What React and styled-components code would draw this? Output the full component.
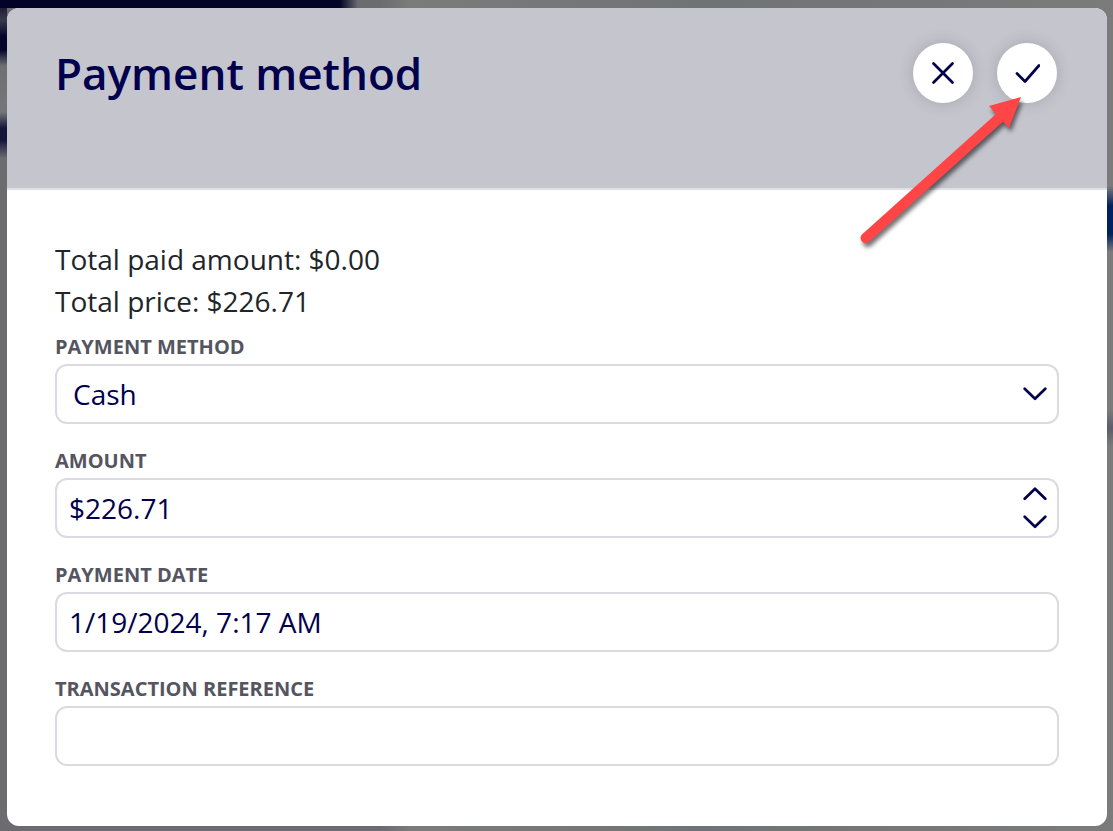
import React, { useState } from "react";
import styled, { createGlobalStyle } from "styled-components";

const navy = "#00004d";

const GlobalStyle = createGlobalStyle`
    * {
        box-sizing: border-box;
    }

    body {
        margin: 0;
        font-family: "Open Sans", "Noto Sans", sans-serif;
    }
`;

const Backdrop = styled.div`
    min-height: 100vh;
    padding: 8px 6px 5px 7px;
    background:
        linear-gradient(90deg, #030327 0, #030327 340px, transparent 358px) 0 0 / 100% 8px no-repeat,
        linear-gradient(#0a0a2c 0, #3a3a4e 20px, #05052c 36px, #05052c 50px, #707072 66px, #76767a 112px, #15153a 128px, #15153a 140px, #6b6b70 158px, #6b6b70 100%) 0 0 / 7px 100% no-repeat,
        linear-gradient(transparent 186px, #00205f 206px, #00205f 234px, transparent 252px, transparent 410px, #5c5c6c 428px, transparent 446px) 100% 0 / 6px 100% no-repeat,
        linear-gradient(90deg, #6b6b70 0, #6b6b70 380px, #7b7b7b 410px, #707375 700px, #7b7b7b 100%);
`;

const Dialog = styled.form`
    position: relative;
    display: flex;
    flex-direction: column;
    border-radius: 12px;
    background: #fff;
`;

const Header = styled.header`
    display: flex;
    justify-content: space-between;
    align-items: flex-start;
    min-height: 182px;
    padding: 35px 50px 0 48px;
    border-bottom: 2px solid #dfdfe6;
    border-radius: 12px 12px 0 0;
    background: #c5c5ce;
`;

const Title = styled.h1`
    margin: 0;
    color: ${navy};
    font-size: 44px;
    font-weight: 600;
    line-height: 60px;
`;

const Actions = styled.div`
    display: flex;
    gap: 24px;
`;

const RoundButton = styled.button`
    display: flex;
    align-items: center;
    justify-content: center;
    width: 60px;
    height: 60px;
    padding: 0;
    border: 0;
    border-radius: 50%;
    background: #fff;
    color: ${navy};
    box-shadow: 0 0 16px rgba(0, 0, 0, 0.16);
    cursor: pointer;
`;

const Body = styled.div`
    padding: 48px 48px 60px;
`;

const Totals = styled.div`
    margin-bottom: 8px;
    color: #212529;
    font-size: 28px;
    line-height: 42px;
`;

const Total = styled.p`
    margin: 0;
`;

const Fields = styled.div`
    display: flex;
    flex-direction: column;
    gap: 20px;
`;

const Label = styled.label`
    display: block;
    color: #555560;
    font-size: 20px;
    font-weight: 700;
    line-height: 34px;
    text-transform: uppercase;
`;

const Control = styled.div`
    display: grid;
    grid-template-columns: 1fr 44px;
    align-items: center;
    height: 60px;
    border: 2px solid #dadae1;
    border-radius: 12px;
    background: #fff;
    color: ${navy};

    & > * {
        grid-row: 1;
    }

    & > svg {
        grid-column: 2;
        justify-self: center;
        pointer-events: none;
    }
`;

const Input = styled.input`
    grid-column: ${props => (props.$wide ? "1 / -1" : "1")};
    width: 100%;
    height: 56px;
    padding: 0 12px;
    border: 0;
    border-radius: 10px;
    outline: 0;
    background: transparent;
    color: inherit;
    font-family: inherit;
    font-size: 28px;
`;

const Select = styled.select`
    grid-column: 1 / -1;
    width: 100%;
    height: 56px;
    padding: 0 44px 0 16px;
    border: 0;
    outline: 0;
    appearance: none;
    background: transparent;
    color: inherit;
    font-family: inherit;
    font-size: 28px;
`;

const Stepper = styled.div`
    display: flex;
    flex-direction: column;
`;

const StepButton = styled.button`
    display: flex;
    align-items: center;
    justify-content: center;
    height: 28px;
    padding: 0;
    border: 0;
    background: transparent;
    color: inherit;
    cursor: pointer;
`;

const Pointer = styled.svg`
    position: absolute;
    top: 82px;
    right: 67px;
    pointer-events: none;
    filter: drop-shadow(2px 4px 2px rgba(0, 0, 0, 0.55));
`;

const Stroke = ({ d, width, height }) =>
    <svg width={width} height={height} viewBox={`0 0 ${width} ${height}`} fill="none" stroke="currentColor" strokeWidth="2.7" strokeLinecap="round" strokeLinejoin="round" aria-hidden="true">
        <path d={d} />
    </svg>

const ChevronDown = () => <Stroke width={24} height={14} d="M1.700 1.700 12 11.700 22.300 1.700" />

const ChevronUp = () => <Stroke width={24} height={14} d="M1.700 11.700 12 1.700 22.300 11.700" />

const Arrow = () =>
    <Pointer width="190" height="170" viewBox="0 0 190 170" aria-hidden="true">
        <path d="M171 7 139 16 146 24 12.500 144 A5 5 0 0 0 19 152 L153 31.500 159 38Z" fill="#ff4545" />
    </Pointer>

export const Field = props =>
    <div>
        <Label htmlFor={props.id}>{props.label}</Label>
        <Control>{props.children}</Control>
    </div>

const App = () => {
    const [amount, setAmount] = useState(226.71);
    const [date, setDate] = useState("1/19/2024, 7:17 AM");
    const [reference, setReference] = useState("");

    return (
        <Backdrop>
            <GlobalStyle />
            <Dialog onSubmit={e => e.preventDefault()}>
                <Header>
                    <Title>Payment method</Title>
                    <Actions>
                        <RoundButton type="button" aria-label="Close">
                            <Stroke width={24} height={24} d="M2.500 2.500 21.500 21.500M21.500 2.500 2.500 21.500" />
                        </RoundButton>
                        <RoundButton type="submit" aria-label="Confirm">
                            <Stroke width={26} height={20} d="M3 10.500 11 18.500 25 2.500" />
                        </RoundButton>
                    </Actions>
                </Header>
                <Body>
                    <Totals>
                        <Total>Total paid amount: $0.00</Total>
                        <Total>Total price: $226.71</Total>
                    </Totals>
                    <Fields>
                        <Field id="method" label="Payment method">
                            <Select id="method" defaultValue="Cash">
                                <option>Cash</option>
                            </Select>
                            <ChevronDown />
                        </Field>
                        <Field id="amount" label="Amount">
                            <Input
                                id="amount"
                                value={`$${amount.toFixed(2)}`}
                                onChange={e => setAmount(Number(e.target.value.replace(/[^0-9.]/g, "")) || 0)}
                            />
                            <Stepper>
                                <StepButton type="button" aria-label="Increase amount" onClick={() => setAmount(amount + 1)}>
                                    <ChevronUp />
                                </StepButton>
                                <StepButton type="button" aria-label="Decrease amount" onClick={() => setAmount(Math.max(0, amount - 1))}>
                                    <ChevronDown />
                                </StepButton>
                            </Stepper>
                        </Field>
                        <Field id="date" label="Payment date">
                            <Input id="date" $wide value={date} onChange={e => setDate(e.target.value)} />
                        </Field>
                        <Field id="reference" label="Transaction reference">
                            <Input id="reference" $wide value={reference} onChange={e => setReference(e.target.value)} />
                        </Field>
                    </Fields>
                </Body>
                <Arrow />
            </Dialog>
        </Backdrop>
    );
}

export default App;
